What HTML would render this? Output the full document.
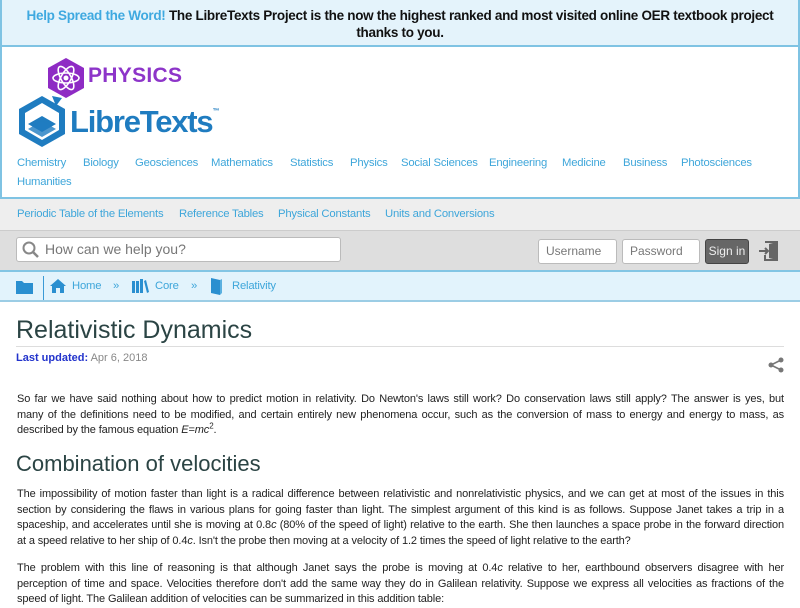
<!DOCTYPE html>
<html><head><meta charset="utf-8">
<style>
*{margin:0;padding:0;box-sizing:border-box}
body{width:800px;height:600px;overflow:hidden;background:#fff;font-family:"Liberation Sans",sans-serif;position:relative;color:#222}
.a{position:absolute;white-space:nowrap}
.ban{position:absolute;left:0;top:0;width:800px;height:47px;background:#e4f3fb;border:2px solid #7fc3e3;border-top:none}
.hdr{position:absolute;left:0;top:46px;width:800px;height:153px;border:2px solid #7fc3e3;border-top:none}
.nl{font-size:11.3px;color:#3ea6da;letter-spacing:-0.2px}
.nav2{position:absolute;left:0;top:199px;width:800px;height:32px;background:#eeeeee;border-bottom:1px solid #ccc}
.sb{position:absolute;left:0;top:231px;width:800px;height:41px;background:#dedede;border-bottom:2px solid #82c5e4}
.bc{position:absolute;left:0;top:272px;width:800px;height:30px;background:#e2f3fc;border-bottom:2px solid #9ccde5}
.inp{position:absolute;background:#fff;border:1px solid #bbb;border-radius:3px;font-size:12px;color:#777;padding-left:7px;line-height:23px}
.p div{text-align:justify;text-align-last:justify;white-space:nowrap;overflow:hidden;height:15.6px;font-size:11px;letter-spacing:-0.12px;line-height:15.6px;color:#222}
.p div.l{text-align-last:left}
.p{position:absolute;left:17px;width:767px}
sup{line-height:0}
</style></head><body>
<div class="ban"></div>
<div class="a" style="left:0;width:800px;top:7px;text-align:center;font-size:13.5px;letter-spacing:-0.3px;font-weight:bold;line-height:17px;color:#111">
<span style="color:#3fa9e0">Help Spread the Word!</span> The LibreTexts Project is the now the highest ranked and most visited online OER textbook project<br>thanks to you.</div>
<div class="hdr"></div>
<svg class="a" style="left:46px;top:57px" width="40" height="42" viewBox="0 0 40 42"><polygon points="20,1 38,11 38,31 20,41 2,31 2,11" fill="#8e2bc4"/><g fill="none" stroke="#fff" stroke-width="1.6"><ellipse cx="20" cy="21" rx="13" ry="5"/><ellipse cx="20" cy="21" rx="13" ry="5" transform="rotate(60 20 21)"/><ellipse cx="20" cy="21" rx="13" ry="5" transform="rotate(-60 20 21)"/></g><circle cx="20" cy="21" r="2.5" fill="#fff"/></svg>
<div class="a" style="left:88px;top:64px;font-size:21px;font-weight:bold;color:#8d35c9;letter-spacing:0.3px">PHYSICS</div>
<svg class="a" style="left:16px;top:94px" width="52" height="54" viewBox="0 0 52 54"><polygon points="26,2 49,15 49,40 26,53 3,40 3,15" fill="#1f7cc0"/><polygon points="26,9 43,19 43,36 26,46 9,36 9,19" fill="#fff"/><g fill="#1f7cc0"><path d="M12 30 L26 22 L40 30 L26 38Z"/><path d="M12 35 L26 27 L40 35 L26 43Z" opacity=".8"/></g><path d="M36 2 L46 4 L40 12Z" fill="#1f7cc0"/></svg>
<div class="a" style="left:70px;top:104px;font-size:31px;font-weight:bold;color:#1f7cc0;letter-spacing:-1.2px">LibreTexts<sup style="font-size:7px;vertical-align:top;position:relative;top:8px">™</sup></div>
<div class="a nl" style="left:17px;top:157px">Chemistry</div>
<div class="a nl" style="left:83px;top:157px">Biology</div>
<div class="a nl" style="left:135px;top:157px">Geosciences</div>
<div class="a nl" style="left:211px;top:157px">Mathematics</div>
<div class="a nl" style="left:290px;top:157px">Statistics</div>
<div class="a nl" style="left:350px;top:157px">Physics</div>
<div class="a nl" style="left:401px;top:157px">Social Sciences</div>
<div class="a nl" style="left:489px;top:157px">Engineering</div>
<div class="a nl" style="left:562px;top:157px">Medicine</div>
<div class="a nl" style="left:623px;top:157px">Business</div>
<div class="a nl" style="left:681px;top:157px">Photosciences</div>
<div class="a nl" style="left:17px;top:176px">Humanities</div>
<div class="nav2"></div>
<div class="a nl" style="left:17px;top:208px">Periodic Table of the Elements</div>
<div class="a nl" style="left:179px;top:208px">Reference Tables</div>
<div class="a nl" style="left:278px;top:208px">Physical Constants</div>
<div class="a nl" style="left:385px;top:208px">Units and Conversions</div>
<div class="sb"></div>
<div class="inp" style="left:16px;top:237px;width:325px;height:25px;font-size:14px;padding-left:28px;color:#777">How can we help you?</div>
<svg class="a" style="left:21px;top:240px" width="20" height="20" viewBox="0 0 20 20"><circle cx="8" cy="8" r="5.5" fill="none" stroke="#888" stroke-width="2"/><path d="M12 12 L17 17" stroke="#888" stroke-width="2.5"/></svg>
<div class="inp" style="left:538px;top:239px;width:79px;height:25px">Username</div>
<div class="inp" style="left:622px;top:239px;width:78px;height:25px">Password</div>
<div class="a" style="left:705px;top:239px;width:44px;height:25px;background:#666;border:1px solid #444;border-radius:3px;color:#eee;font-size:12px;line-height:23px;text-align:center">Sign in</div>
<svg class="a" style="left:757px;top:239px" width="24" height="24" viewBox="0 0 24 24"><path d="M8 3 H20 V21 H8 V16" fill="none" stroke="#666" stroke-width="2"/><path d="M12 5 L20 3 V21 L12 19Z" fill="#666"/><path d="M2 12 H11 M8 9 L11 12 L8 15" stroke="#666" stroke-width="2" fill="none"/></svg>
<div class="bc"></div>
<svg class="a" style="left:16px;top:279px" width="18" height="15" viewBox="0 0 18 15"><path d="M0 2 H6 L8 4 H17 V15 H0Z" fill="#2a8fd0"/></svg>
<div class="a" style="left:43px;top:276px;width:1px;height:24px;background:#3a9ad6"></div>
<svg class="a" style="left:50px;top:279px" width="16" height="14" viewBox="0 0 16 14"><path d="M8 0 L16 7 H14 V14 H10 V9 H6 V14 H2 V7 H0Z" fill="#2a8fd0"/></svg>
<div class="a nl" style="left:72px;top:280px">Home</div>
<div class="a nl" style="left:113px;top:280px">»</div>
<svg class="a" style="left:132px;top:279px" width="17" height="14" viewBox="0 0 17 14"><rect x="0" y="2" width="3" height="12" fill="#2a8fd0"/><rect x="4" y="2" width="3" height="12" fill="#2a8fd0"/><rect x="8" y="0" width="3" height="14" fill="#2a8fd0"/><path d="M12 2 L14 1 L17 13 L15 14Z" fill="#2a8fd0"/></svg>
<div class="a nl" style="left:155px;top:280px">Core</div>
<div class="a nl" style="left:191px;top:280px">»</div>
<svg class="a" style="left:210px;top:277px" width="13" height="18" viewBox="0 0 13 18"><path d="M1 1 L10 3 V18 L1 16Z" fill="#2a8fd0"/><path d="M10 3 L12 2 V16 L10 18" fill="#5ab0e0"/></svg>
<div class="a nl" style="left:232px;top:280px">Relativity</div>
<div class="a" style="left:16px;top:316px;font-size:25px;color:#2b4444">Relativistic Dynamics</div>
<div class="a" style="left:16px;top:346px;width:768px;height:1px;background:#ddd"></div>
<div class="a" style="left:16px;top:352px;font-size:11px"><b style="color:#2233cc">Last updated:</b> <span style="color:#888">Apr 6, 2018</span></div>
<svg class="a" style="left:768px;top:357px" width="16" height="16" viewBox="0 0 16 16"><circle cx="13" cy="3" r="2.5" fill="#777"/><circle cx="3" cy="8" r="2.5" fill="#777"/><circle cx="13" cy="13" r="2.5" fill="#777"/><path d="M13 3 L3 8 L13 13" stroke="#777" stroke-width="1.6" fill="none"/></svg>
<div class="p" style="top:392px">
<div>So far we have said nothing about how to predict motion in relativity. Do Newton's laws still work? Do conservation laws still apply? The answer is yes, but</div>
<div>many of the definitions need to be modified, and certain entirely new phenomena occur, such as the conversion of mass to energy and energy to mass, as</div>
<div class="l" style="overflow:visible">described by the famous equation <i>E</i>=<i>mc</i><sup style="font-size:8px">2</sup>.</div>
</div>
<div class="a" style="left:16px;top:451px;font-size:22px;color:#2b4444">Combination of velocities</div>
<div class="p" style="top:487px">
<div>The impossibility of motion faster than light is a radical difference between relativistic and nonrelativistic physics, and we can get at most of the issues in this</div>
<div>section by considering the flaws in various plans for going faster than light. The simplest argument of this kind is as follows. Suppose Janet takes a trip in a</div>
<div>spaceship, and accelerates until she is moving at 0.8<i>c</i> (80% of the speed of light) relative to the earth. She then launches a space probe in the forward direction</div>
<div class="l">at a speed relative to her ship of 0.4<i>c</i>. Isn't the probe then moving at a velocity of 1.2 times the speed of light relative to the earth?</div>
</div>
<div class="p" style="top:561px">
<div>The problem with this line of reasoning is that although Janet says the probe is moving at 0.4<i>c</i> relative to her, earthbound observers disagree with her</div>
<div>perception of time and space. Velocities therefore don't add the same way they do in Galilean relativity. Suppose we express all velocities as fractions of the</div>
<div class="l">speed of light. The Galilean addition of velocities can be summarized in this addition table:</div>
</div>
</body></html>
